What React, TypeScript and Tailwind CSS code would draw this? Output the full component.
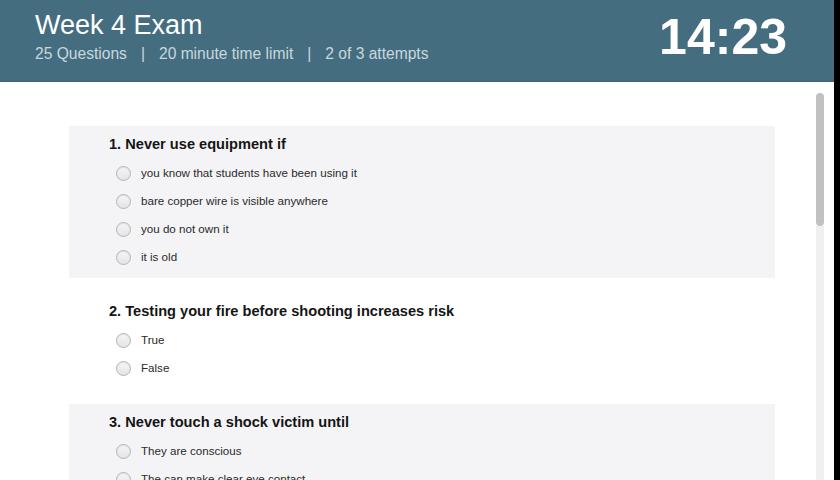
import React from 'react';

type Question = { title: string; options: string[]; shaded: boolean };

const questions: Question[] = [
    {
        title: '1. Never use equipment if',
        options: [
            'you know that students have been using it',
            'bare copper wire is visible anywhere',
            'you do not own it',
            'it is old',
        ],
        shaded: true,
    },
    {
        title: '2. Testing your fire before shooting increases risk',
        options: ['True', 'False'],
        shaded: false,
    },
    {
        title: '3. Never touch a shock victim until',
        options: ['They are conscious', 'The can make clear eye contact'],
        shaded: true,
    },
];

const Radio = () => (
    <span className="w-[15px] h-[15px] rounded-full border border-[#b4b4b8] bg-gradient-to-b from-[#f6f6f6] to-[#e4e4e6] shadow-[inset_0_1px_1px_rgba(0,0,0,0.08)] shrink-0" />
);

const QuestionBlock: React.FC<{ q: Question }> = ({ q }) => (
    <div className={`w-[706px] pt-[8px] pb-[7px] ${q.shaded ? 'bg-[#f4f4f7]' : ''}`}>
        <h2 className="pl-[40px] h-[20px] leading-[20px] text-[14.6px] font-bold text-[#151515]">{q.title}</h2>
        <div className="mt-[5px] pl-[47px]">
            {q.options.map((opt) => (
                <label key={opt} className="flex items-center h-[28px] gap-[10px]">
                    <Radio />
                    <span className="text-[11.6px] text-[#2a2a2a]">{opt}</span>
                </label>
            ))}
        </div>
    </div>
);

export default function App() {
    return (
        <div className="w-[840px] h-[480px] flex overflow-hidden bg-black" style={{ fontFamily: '"Liberation Sans", Arial, sans-serif' }}>
            <div className="w-[834px] flex flex-col bg-white">
                {/* Header */}
                <div className="h-[82px] shrink-0 bg-[#456d80] border-b border-[#3b6072] flex items-start justify-between pl-[35px] pr-[47px]">
                    <div>
                        <h1 className="mt-[9px] text-[27px] leading-[33px] text-white">Week 4 Exam</h1>
                        <p className="mt-[3px] text-[15.6px] leading-[18px] text-[#c9d7de]">
                            25 Questions
                            <span className="mx-[14px]">|</span>
                            20 minute time limit
                            <span className="mx-[14px]">|</span>
                            2 of 3 attempts
                        </p>
                    </div>
                    <div className="mt-[11px] text-[50px] leading-[52px] font-bold text-white">14:23</div>
                </div>

                {/* Body */}
                <div className="flex flex-1 overflow-hidden">
                    <div className="flex-1 pt-[44px] pl-[69px] flex flex-col gap-[15px]">
                        {questions.map((q) => (
                            <QuestionBlock key={q.title} q={q} />
                        ))}
                    </div>
                    <div className="w-[17px] shrink-0 pl-[1px] pt-[11px] flex flex-col">
                        <div className="w-[8px] h-[133px] rounded-full bg-[#c1c1c1]" />
                        <div className="w-[8px] flex-1 bg-[#f0f0f0]" />
                    </div>
                    <div className="w-[2px] shrink-0" />
                </div>
            </div>
        </div>
    );
}
